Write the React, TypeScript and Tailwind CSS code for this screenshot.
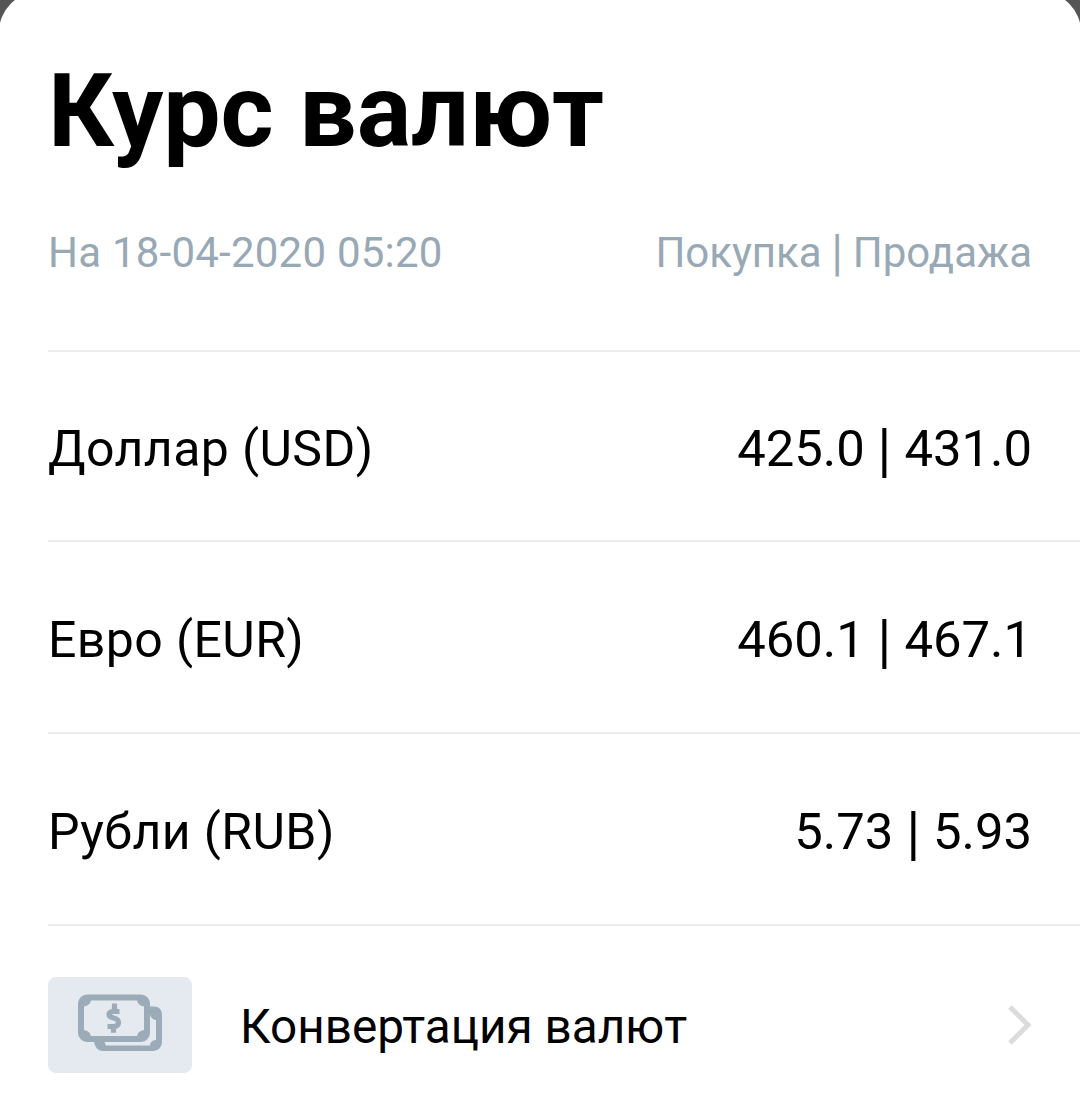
interface Rate {
  name: string;
  buy: string;
  sell: string;
}

const rates: Rate[] = [
  { name: "Доллар (USD)", buy: "425.0", sell: "431.0" },
  { name: "Евро (EUR)", buy: "460.1", sell: "467.1" },
  { name: "Рубли (RUB)", buy: "5.73", sell: "5.93" },
];

const MoneyIcon = () => (
  <svg width="144" height="96" viewBox="0 0 144 96" fill="none" stroke="#9babb7">
    <path
      d="M102 29.500h4c5 0 8 3.500 8 8V65c0 5-4 9-9 9H55c-5 0-8-4-9-9h10.500l1.500 3.500h44c0-3 2.500-5.500 6-5.500V43c-3 0-6-3-6-6z"
      fill="#9babb7"
      stroke="none"
    />
    <rect x="33" y="20.500" width="66" height="41.500" rx="6" fill="#e4eaf0" strokeWidth="6" />
    <path
      d="M35 22.500h8c0 4-3.500 7-8 7zM97 22.500h-8c0 4 3.500 7 8 7zM35 60h8c0-4-3.500-7-8-7zM97 60h-8c0-4 3.500-7 8-7z"
      fill="#9babb7"
      stroke="none"
    />
    <path
      d="M71.500 34.500h-6c-3 0-4.500 1.200-4.500 3s1.500 2.700 4 3.300c3.800.9 5.500 2 5.500 4.700s-2 4-5 4h-6M66.500 26.500v7M65.500 50v5.800"
      strokeWidth="5.200"
    />
  </svg>
);

const RateRow = ({ rate }: { rate: Rate }) => {
  return (
    <div className="flex h-48 items-center justify-between border-b-2 border-[#ededed] pt-1.5 pr-12 first:h-[190px]">
      <span className="text-[50px] tracking-[0.400px]">{rate.name}</span>
      <span className="text-[50.800px]">
        {rate.buy} <span className="mx-[1px] inline-block origin-[50%_38%] scale-x-110 scale-y-[1.17]">|</span> {rate.sell}
      </span>
    </div>
  );
};

const App = () => {
  return (
    <div className="h-[1112px] w-[1080px] overflow-hidden bg-[#555555]">
      <main className="-mx-px -mt-2 h-[1120px] rounded-t-[40px] bg-white pt-2 pr-px pl-[49px] font-[Roboto,sans-serif] text-black">
        <h1 className="h-[224px] pt-[51px] text-[102px] leading-[120px] font-bold">Курс валют</h1>
        <div className="flex h-32 justify-between border-b-2 border-[#ededed] pr-12 text-[42px] leading-[58px] text-[#98a9b5]">
          <span className="tracking-[0.230px]">На 18-04-2020 05:20</span>
          <span>
            Покупка <span className="inline-block origin-[50%_40%] scale-x-110 scale-y-[1.17]">|</span> Продажа
          </span>
        </div>
        <div>
          {rates.map((rate) => (
            <RateRow key={rate.name} rate={rate} />
          ))}
        </div>
        <div className="flex h-[186px] items-center pt-3 pr-12 text-[47.700px]">
          <div className="h-24 w-36 rounded-lg bg-[#e4eaf0]">
            <MoneyIcon />
          </div>
          <span className="ml-12 grow pt-1.5">Конвертация валют</span>
          <svg width="24" height="40" viewBox="0 0 24 40" fill="none" stroke="#dcdcdc" strokeWidth="5">
            <path d="M2 2l18 18L2 38" />
          </svg>
        </div>
      </main>
    </div>
  );
};

export default App;
